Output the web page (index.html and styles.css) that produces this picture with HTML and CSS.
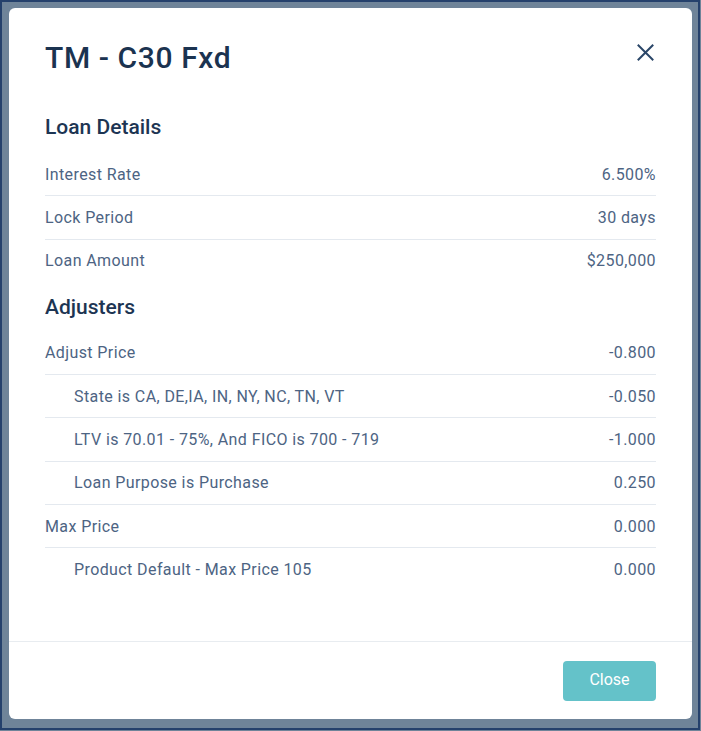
FILE: index.html
```html
<!DOCTYPE html>
<html lang="en">
<head>
<meta charset="utf-8">
<title>TM - C30 Fxd</title>
<link rel="stylesheet" href="styles.css">
</head>
<body>
<div class="frame">
  <div class="modal">
    <div class="modal-header">
      <h1 class="modal-title">TM - C30 Fxd</h1>
      <button class="close-x" aria-label="Close">
        <svg width="17" height="17" viewBox="0 0 17 17"><path d="M1.5 1.5 L15.5 15.5 M15.5 1.5 L1.5 15.5" stroke="#2a4668" stroke-width="2" fill="none" stroke-linecap="square"/></svg>
      </button>
    </div>
    <div class="modal-body">
      <h2 class="section-title first">Loan Details</h2>
      <div class="rows">
        <div class="row"><span>Interest Rate</span><span>6.500%</span></div>
        <div class="row"><span>Lock Period</span><span>30 days</span></div>
        <div class="row"><span>Loan Amount</span><span>$250,000</span></div>
      </div>
      <h2 class="section-title">Adjusters</h2>
      <div class="rows">
        <div class="row"><span>Adjust Price</span><span>-0.800</span></div>
        <div class="row sub"><span>State is CA, DE,IA, IN, NY, NC, TN, VT</span><span>-0.050</span></div>
        <div class="row sub"><span>LTV is 70.01 - 75%, And FICO is 700 - 719</span><span>-1.000</span></div>
        <div class="row sub"><span>Loan Purpose is Purchase</span><span>0.250</span></div>
        <div class="row"><span>Max Price</span><span>0.000</span></div>
        <div class="row sub"><span>Product Default - Max Price 105</span><span>0.000</span></div>
      </div>
    </div>
    <div class="modal-footer">
      <button class="btn-close">Close</button>
    </div>
  </div>
</div>
</body>
</html>
```

FILE: styles.css
```css
* { box-sizing: border-box; }
html, body {
  margin: 0;
  padding: 0;
  background: #6f8499;
}
body {
  font-family: Roboto, "Liberation Sans", sans-serif;
}
.frame {
  width: 700px;
  height: 730px;
  border: 2px solid #25416c;
  padding: 6px 6px 0 7px;
  background: #6f8499;
}
.modal {
  width: 683px;
  height: 711px;
  background: #ffffff;
  border-radius: 6px;
  display: flex;
  flex-direction: column;
}
.modal-header {
  display: flex;
  justify-content: space-between;
  align-items: flex-start;
  padding: 33px 36px 0 36px;
}
.modal-title {
  margin: 0;
  font-size: 30px;
  line-height: 34px;
  font-weight: 500;
  letter-spacing: 0.6px;
  color: #1b3350;
}
.close-x {
  border: 0;
  background: none;
  padding: 0;
  margin: 3px 2px 0 0;
  width: 17px;
  height: 17px;
  display: flex;
  cursor: pointer;
}
.modal-body {
  flex: 1;
  padding: 0 36px;
}
.section-title {
  margin: 13px 0 13px 0;
  font-size: 21px;
  line-height: 24px;
  font-weight: 500;
  color: #1d3553;
}
.section-title.first {
  margin-top: 40px;
  margin-bottom: 14px;
}
.row {
  display: flex;
  justify-content: space-between;
  font-size: 16px;
  line-height: 18px;
  letter-spacing: 0.4px;
  color: #4d6483;
  padding: 12.65px 0 11.65px 0;
  border-bottom: 1px solid #e4e9ef;
}
.row:last-child {
  border-bottom: 0;
}
.row.sub span:first-child {
  padding-left: 29px;
}
.modal-footer {
  border-top: 1px solid #e8ecf0;
  padding: 19px 36px 18px 36px;
  display: flex;
  justify-content: flex-end;
}
.btn-close {
  width: 93px;
  height: 40px;
  border: 0;
  border-radius: 4px;
  background: #64c2c9;
  color: #ffffff;
  font-family: Roboto, "Liberation Sans", sans-serif;
  font-size: 16px;
  padding: 0 0 3px 0;
  cursor: pointer;
}
```
